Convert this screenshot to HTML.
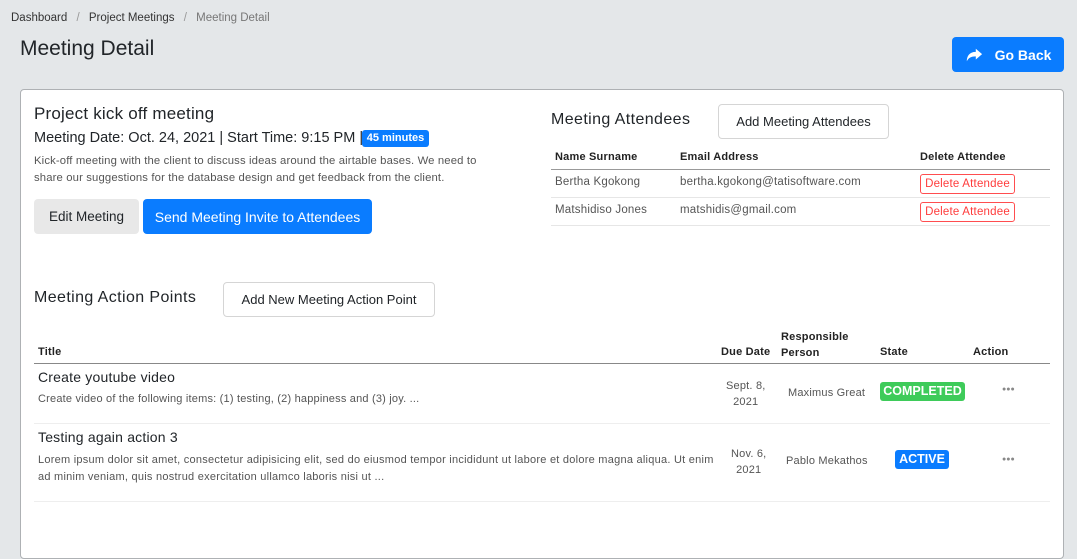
<!DOCTYPE html>
<html><head><style>
*{box-sizing:border-box;margin:0;padding:0}
body{width:1077px;height:519px;overflow:hidden;background:#e4e7e9;font-family:"Liberation Sans",Arial,sans-serif;color:#212529;position:relative}
.a{position:absolute;white-space:nowrap}
.card{position:absolute;left:20px;top:89px;width:1044px;height:470px;background:#fff;border:1px solid #aeb1b4;border-radius:4px}
.btn{position:absolute;border-radius:4px;font-size:14px;display:flex;align-items:center;justify-content:center}
.hr{position:absolute;height:1px;background:#e6e6e6}
.del{position:absolute;left:920px;width:95px;height:20px;border:1px solid #ff4d4f;border-radius:3px;color:#ff3b3b;font-size:11.5px;display:flex;align-items:center;justify-content:center;letter-spacing:.2px}
.th{font-size:11px;font-weight:bold;color:#222;letter-spacing:.2px}
.td{font-size:11.5px;color:#555;letter-spacing:.2px}
</style></head><body>
<div class="a" style="left:11px;top:12px;font-size:11.5px;color:#333">Dashboard <span style="color:#999;margin:0 6px">/</span> Project Meetings <span style="color:#999;margin:0 6px">/</span> <span style="color:#777">Meeting Detail</span></div>
<div class="a" style="left:20px;top:37px;font-size:21px">Meeting Detail</div>
<div class="btn" style="left:952px;top:37px;width:112px;height:35px;background:#0a7cff;color:#fff;font-weight:bold;font-size:14px">
<svg width="18" height="16" viewBox="0 0 20 16" style="margin-right:12px"><path d="M12 1 L19 7 L12 13 L12 9.5 C7 9.5 4 11 2 15 C2 9 5 4.5 12 4.5 Z" fill="#fff"/></svg>Go Back</div>
<div class="card"></div>
<div class="a" style="left:34px;top:104px;font-size:17px;letter-spacing:.2px">Project kick off meeting</div>
<div class="a" style="left:34px;top:130px;font-size:14.5px">Meeting Date: Oct. 24, 2021 | Start Time: 9:15 PM |</div>
<div class="a" style="left:362px;top:130px;width:67px;height:17px;background:#0a7cff;color:#fff;font-size:11px;font-weight:bold;border-radius:3px;text-align:center;line-height:17px">45 minutes</div>
<div class="a" style="left:34px;top:153px;font-size:11.3px;color:#555;line-height:17px;letter-spacing:.14px">Kick-off meeting with the client to discuss ideas around the airtable bases. We need to<br>share our suggestions for the database design and get feedback from the client.</div>
<div class="btn" style="left:34px;top:199px;width:105px;height:35px;background:#e8e8e8;font-size:13.5px">Edit Meeting</div>
<div class="btn" style="left:143px;top:199px;width:229px;height:35px;background:#0a7cff;color:#fff">Send Meeting Invite to Attendees</div>

<div class="a" style="left:551px;top:111px;font-size:16px;letter-spacing:.4px">Meeting Attendees</div>
<div class="btn" style="left:718px;top:104px;width:171px;height:35px;border:1px solid #d5d5d5;font-size:13px">Add Meeting Attendees</div>
<div class="a th" style="left:555px;top:151px">Name Surname</div>
<div class="a th" style="left:680px;top:151px">Email Address</div>
<div class="a th" style="left:920px;top:151px">Delete Attendee</div>
<div class="hr" style="left:551px;top:169px;width:499px;background:#999"></div>
<div class="a td" style="left:555px;top:176px">Bertha Kgokong</div>
<div class="a td" style="left:680px;top:176px">bertha.kgokong@tatisoftware.com</div>
<div class="del" style="top:174px">Delete Attendee</div>
<div class="hr" style="left:551px;top:197px;width:499px"></div>
<div class="a td" style="left:555px;top:204px">Matshidiso Jones</div>
<div class="a td" style="left:680px;top:204px">matshidis@gmail.com</div>
<div class="del" style="top:202px">Delete Attendee</div>
<div class="hr" style="left:551px;top:225px;width:499px"></div>

<div class="a" style="left:34px;top:289px;font-size:16px;letter-spacing:.4px">Meeting Action Points</div>
<div class="btn" style="left:223px;top:282px;width:212px;height:35px;border:1px solid #d5d5d5;font-size:13px">Add New Meeting Action Point</div>
<div class="a th" style="left:38px;top:346px">Title</div>
<div class="a th" style="left:721px;top:346px">Due Date</div>
<div class="a th" style="left:781px;top:329px;line-height:16px">Responsible<br>Person</div>
<div class="a th" style="left:880px;top:346px">State</div>
<div class="a th" style="left:973px;top:346px">Action</div>
<div class="hr" style="left:34px;top:363px;width:1016px;background:#888"></div>
<div class="a" style="left:38px;top:369px;font-size:14px;letter-spacing:.2px">Create youtube video</div>
<div class="a td" style="left:38px;top:393px;font-size:11px;letter-spacing:.2px">Create video of the following items: (1) testing, (2) happiness and (3) joy. ...</div>
<div class="a td" style="left:726px;top:378px;text-align:center;line-height:16px;font-size:11px">Sept. 8,<br>2021</div>
<div class="a td" style="left:788px;top:387px;font-size:11px">Maximus Great</div>
<div class="a" style="left:880px;top:382px;width:85px;height:19px;background:#3ecb5a;color:#fff;font-weight:bold;font-size:12.5px;border-radius:3px;text-align:center;line-height:19px">COMPLETED</div>
<div class="a" style="left:1002px;top:386px;color:#888;font-size:7px">●●●</div>
<div class="hr" style="left:34px;top:423px;width:1016px;background:#eee"></div>
<div class="a" style="left:38px;top:429px;font-size:14px;letter-spacing:.2px">Testing again action 3</div>
<div class="a td" style="left:38px;top:452px;font-size:11px;line-height:17px;letter-spacing:.25px">Lorem ipsum dolor sit amet, consectetur adipisicing elit, sed do eiusmod tempor incididunt ut labore et dolore magna aliqua. Ut enim<br>ad minim veniam, quis nostrud exercitation ullamco laboris nisi ut ...</div>
<div class="a td" style="left:731px;top:446px;text-align:center;line-height:16px;font-size:11px">Nov. 6,<br>2021</div>
<div class="a td" style="left:786px;top:455px;font-size:11px">Pablo Mekathos</div>
<div class="a" style="left:895px;top:450px;width:54px;height:19px;background:#0a7cff;color:#fff;font-weight:bold;font-size:12.5px;border-radius:3px;text-align:center;line-height:19px">ACTIVE</div>
<div class="a" style="left:1002px;top:456px;color:#888;font-size:7px">●●●</div>
<div class="hr" style="left:34px;top:501px;width:1016px;background:#eee"></div>
</body></html>
